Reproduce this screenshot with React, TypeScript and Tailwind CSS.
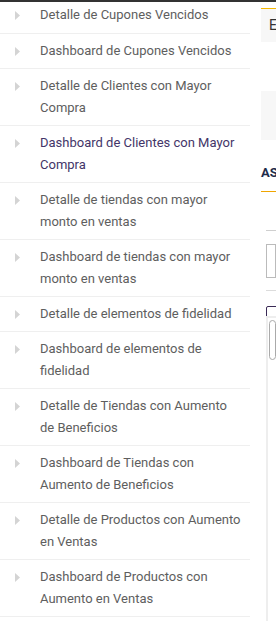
const items = [
  { label: "Detalle de Cupones Vencidos", first: true },
  { label: "Dashboard de Cupones Vencidos" },
  { label: "Detalle de Clientes con Mayor Compra" },
  { label: "Dashboard de Clientes con Mayor Compra", active: true },
  { label: "Detalle de tiendas con mayor monto en ventas" },
  { label: "Dashboard de tiendas con mayor monto en ventas" },
  { label: "Detalle de elementos de fidelidad" },
  { label: "Dashboard de elementos de fidelidad" },
  { label: "Detalle de Tiendas con Aumento de Beneficios" },
  { label: "Dashboard de Tiendas con Aumento de Beneficios" },
  { label: "Detalle de Productos con Aumento en Ventas" },
  { label: "Dashboard de Productos con Aumento en Ventas" },
];

function Caret() {
  return (
    <svg width="5" height="9" viewBox="0 0 5 9" className="mt-[7px] shrink-0">
      <path d="M0 0 L5 4.5 L0 9 Z" fill="#d4d4d4" />
    </svg>
  );
}

function MenuItem({ label, first, active }: { label: string; first?: boolean; active?: boolean }) {
  return (
    <li
      className={`flex gap-5 pl-[15px] border-b border-[#efefef] ${first ? "pt-[2px] pb-[7px]" : "py-[6px]"}`}
    >
      <Caret />
      <span
        className={`w-[202px] text-[13px] leading-[22px] ${active ? "text-[#433568]" : "text-[#5e5e5e]"}`}
      >
        {label}
      </span>
    </li>
  );
}

export default function App() {
  return (
    <div className="w-[276px] h-[621px] overflow-hidden bg-white flex flex-col font-['Roboto','Liberation_Sans',sans-serif]">
      <div className="h-[2px] bg-[#333] shrink-0"></div>
      <div className="flex flex-1">
        {/* Menu list */}
        <ul className="w-[250px] shrink-0">
          {items.map((it, i) => (
            <MenuItem key={i} {...it} />
          ))}
        </ul>

        {/* Cut-off content panel */}
        <div className="flex-1 pl-[11px] pt-[6px] flex flex-col overflow-hidden">
          <div className="border-t border-[#f5b800] bg-[#f7f7f7] h-[34px] pl-[8px] pt-[6px] text-[14px] text-[#333] whitespace-nowrap">
            E
          </div>
          <div className="h-[49px]"></div>
          <div className="bg-[#f7f7f7] h-[49px]"></div>
          <div className="h-[24px]"></div>
          <div className="h-[27px] text-[13px] font-bold text-[#1d2b4a] whitespace-nowrap leading-[18px]">AS</div>
          <div className="h-[1px] bg-[#f0a500]"></div>
          <div className="ml-[5px] flex flex-col">
            <div className="h-[38px]"></div>
            <div className="h-[1px] bg-[#cfcfcf]"></div>
            <div className="h-[13px]"></div>
            <div className="h-[34px] border border-[#bbb]"></div>
            <div className="h-[12px]"></div>
            <div className="h-[1px] bg-[#dcdcdc]"></div>
            <div className="h-[15px]"></div>
            <div className="h-[12px] w-[14px] border border-[#3a2a55] rounded-[2px]"></div>
            <div className="border-l-[2px] border-t-[2px] border-[#eee] h-[320px] -mt-[2px] pl-[1px] pt-[2px]">
              <div className="h-[40px] border border-[#aaa] rounded-[5px]"></div>
            </div>
          </div>
        </div>
      </div>
    </div>
  );
}
